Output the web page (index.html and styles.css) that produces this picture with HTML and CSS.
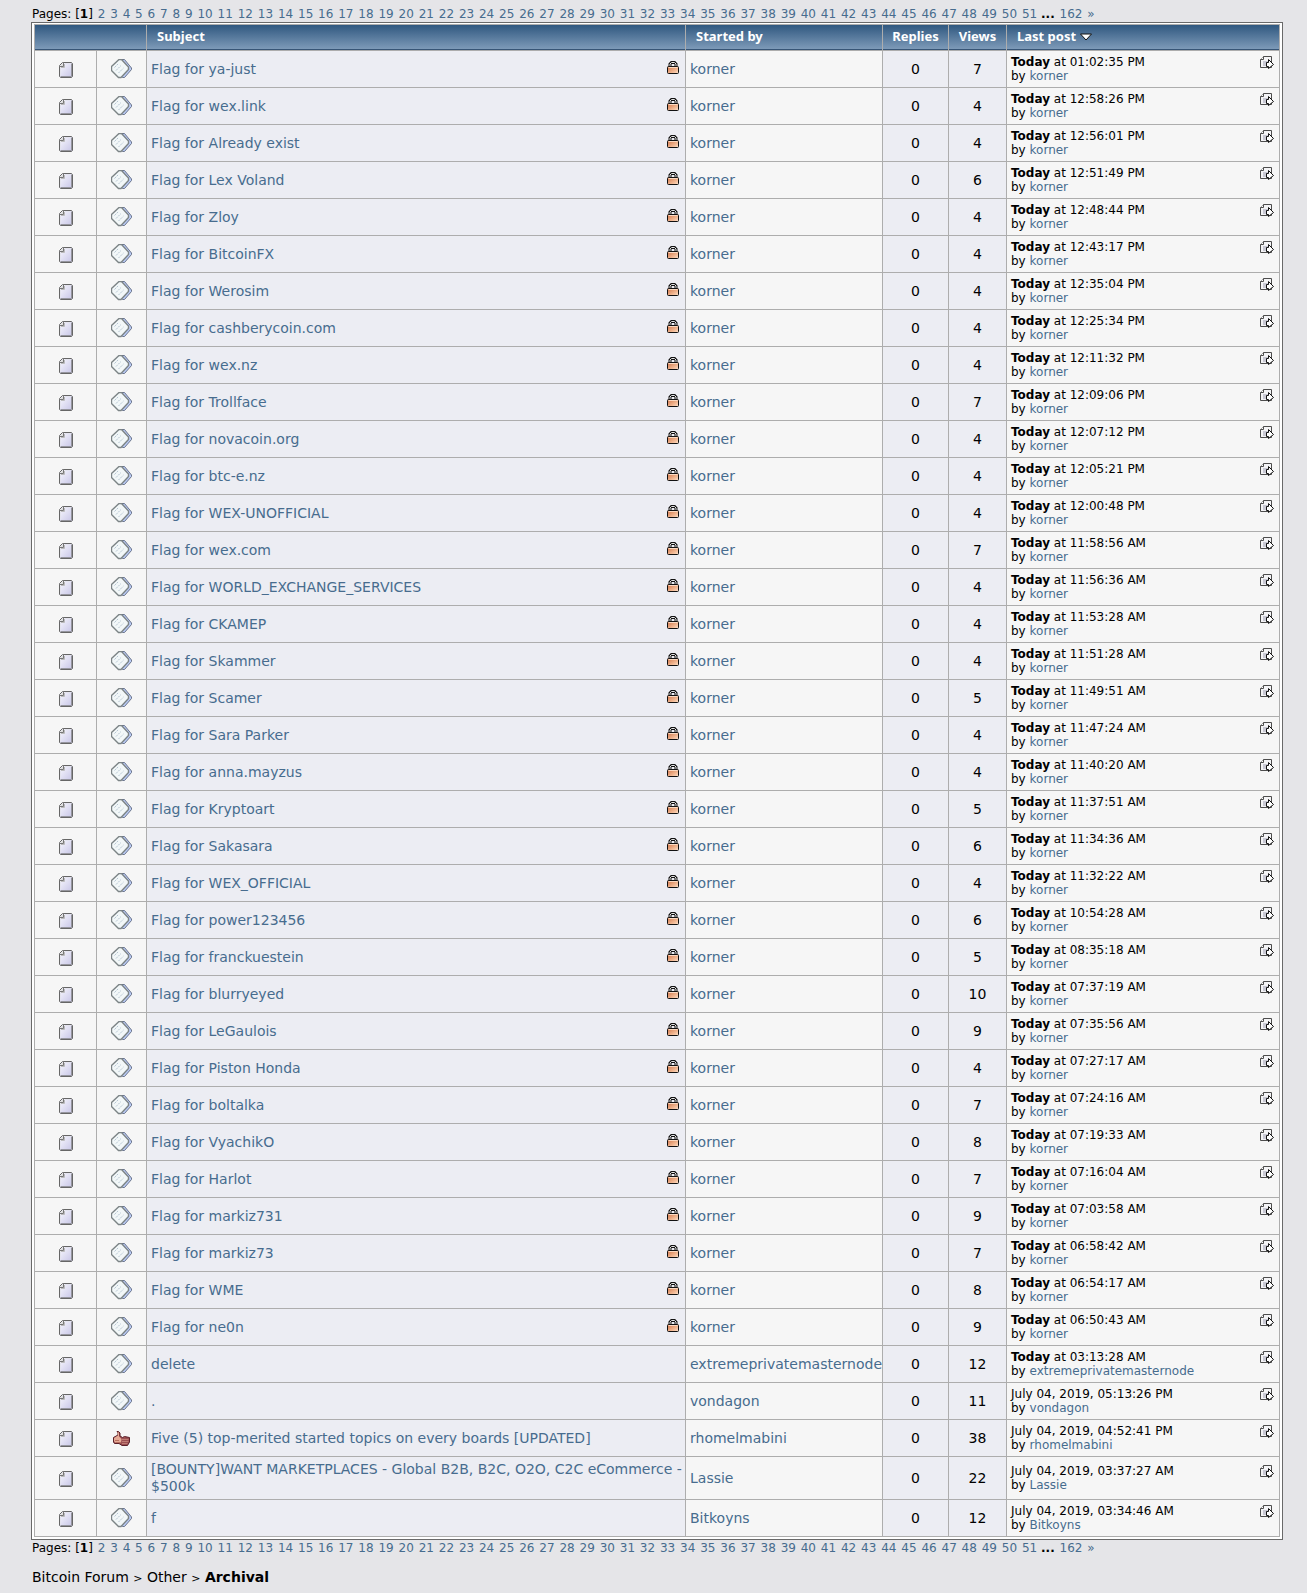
FILE: index.html
```
<!DOCTYPE html>
<html lang="en">
<head>
  <meta charset="UTF-8">
  <meta name="viewport" content="width=device-width, initial-scale=1.0">
  <title>Archival</title>
  <link rel="stylesheet" href="styles.css">
</head>
<body>
  <!-- icon sprites -->
  <svg class="sprites" aria-hidden="true">
    <defs>
      <linearGradient id="page-fill" x1="0" y1="0" x2="1" y2="1">
        <stop offset="0" stop-color="#fafaff"/><stop offset="1" stop-color="#c6c4e6"/>
      </linearGradient>
      <linearGradient id="lock-fill" x1="0" y1="0" x2="1" y2="1">
        <stop offset="0" stop-color="#d0764a"/><stop offset=".6" stop-color="#f0b48e"/><stop offset="1" stop-color="#ffe3cc"/>
      </linearGradient>
    </defs>
    <symbol id="i-topic" viewBox="0 0 14 16">
      <path d="M3.500.5H12.500L13.500 1.500V14.500L12.500 15.500H1.500L.5 14.500V3.500z" fill="url(#page-fill)" stroke="#666"/>
      <path d="M12.500 1.500V14.500H1.500" fill="none" stroke="#96969e"/>
      <path d="M1.500 5.500V13.500M6 1.500H11.500" fill="none" stroke="#e4e4ee"/>
      <path d="M4.500.5V4.500H.5" fill="#ddd" stroke="#777"/>
      <path d="M2 5.500H5.500V2" fill="none" stroke="#bbb"/>
    </symbol>
    <symbol id="i-post" viewBox="0 0 21 20">
      <path d="M11 .5H13.500L20.500 9V10.500L13.500 18.500H11.500L8 15V4z" fill="#b9caf5" stroke="#6c768c"/>
      <path d="M8 .5H10.500L17.500 8V10.500L10 18.500H7.500L.5 11.500V7.500z" fill="#f2f7f8" stroke="#7c8486" stroke-width="1.400"/>
      <path d="M3.500 8.500L7.500 4.500M5 11.500L10 6.500M7.500 14L12.500 9" stroke="#b4c4d2" stroke-dasharray="2 1" fill="none"/>
    </symbol>
    <symbol id="i-thumb" viewBox="0 0 17 16">
      <path d="M4 .5H5.500L7 2V5L9.500 6.500L11.500 5.500L16.500 6.500V11L14.500 14.500H9L6 12.500H1.500L.5 11V6.500L5 4V2z" fill="#9c4f52" stroke="#5a2029"/>
      <path d="M4.500 1H5.500L6 2.500V5.500L8.500 8L8 11.500H2L1 10V7L5 4.500z" fill="#e6aa96"/>
      <path d="M2 9.500H6M3 11.500H8" stroke="#b9705f"/>
      <path d="M9 8.500H15.500M9 10.500H15.500M9 12.500H14.500" stroke="#c07c74"/>
    </symbol>
    <symbol id="i-lock" viewBox="0 0 12 13">
      <path d="M3 6.500V3L4.500 1.500H7.500L9 3V6.500" fill="none" stroke="#111" stroke-width="3"/>
      <path d="M3 6V3L4.500 1.500H7.500L9 3V6" fill="none" stroke="#e6e6e6"/>
      <rect x=".5" y="5.500" width="11" height="7" rx="1" fill="url(#lock-fill)" stroke="#111"/>
      <path d="M1.500 6.500H10.500" stroke="#fbd9c0"/>
    </symbol>
    <symbol id="i-last" viewBox="0 0 14 13">
      <path d="M3.500.5H11.500V11.500H.5V3.500z" fill="#f4f4f6" stroke="#4d4d4d"/>
      <path d="M3 5H9V10H3z" fill="#c9c9d4"/>
      <path d="M3.500.5V3.500H.5" fill="#fff" stroke="#4d4d4d"/>
      <path d="M6.500 6.500H8.500V3.500L13.500 8.500L8.500 12.500V10.500H6.500z" fill="#fff" stroke="#111"/>
    </symbol>
    <symbol id="i-sort" viewBox="0 0 12 8">
      <path d="M.5 1H11.500L6 7z" fill="#fff" stroke="#111"/>
    </symbol>
  </svg>

  <main class="body-area">
    <nav class="pages" aria-label="Pages"></nav>
    <div class="border">
      <table class="topics">
        <colgroup>
          <col class="c-status">
          <col class="c-icon">
          <col class="c-subject">
          <col class="c-starter">
          <col class="c-replies">
          <col class="c-views">
          <col class="c-last">
        </colgroup>
        <thead>
          <tr>
            <th colspan="2"></th>
            <th><a href="#">Subject</a></th>
            <th><a href="#">Started by</a></th>
            <th class="count"><a href="#">Replies</a></th>
            <th class="count"><a href="#">Views</a></th>
            <th><a href="#">Last post <svg width="12" height="8"><use href="#i-sort"/></svg></a></th>
          </tr>
        </thead>
        <tbody id="topic-rows"></tbody>
      </table>
    </div>
    <nav class="pages" aria-label="Pages"></nav>
    <div class="linktree">
      <a href="#">Bitcoin Forum</a> <small>&gt;</small> <a href="#">Other</a> <small>&gt;</small> <a class="current" href="#">Archival</a>
    </div>
  </main>
  <script src="script.js"></script>
</body>
</html>
```
FILE: styles.css
```
body {
  margin: 0;
  padding: 6px 24px 12px 31px;
  background: #e5e5e8;
  color: #000;
  font-family: Verdana, "DejaVu Sans", sans-serif;
  font-size: 14px;
}
a { color: #476c8e; text-decoration: none; }
a:hover { text-decoration: underline; }
.sprites { position: absolute; width: 0; height: 0; }

.pages {
  padding-left: 1px;
  font-size: 12px;
  line-height: 16px;
  white-space: nowrap;
}
.pages a { margin-left: 1px; }

.border {
  border: 1px solid #696969;
  background: #fff;
  padding: 1px 2px 2px;
}
.topics {
  width: 100%;
  background: #adadad;
  border-spacing: 1px;
  table-layout: fixed;
}
.c-status { width: 61px; }
.c-icon { width: 49px; }
.c-starter { width: 196px; }
.c-replies { width: 65px; }
.c-views { width: 57px; }
.c-last { width: 272px; }

.topics th {
  box-sizing: border-box;
  height: 25px;
  padding: 0 10px 3px;
  background: linear-gradient(#305880, #7d9ab8);
  border-bottom: 1px solid #375576;
  font-family: Tahoma, "Noto Sans", sans-serif;
  font-size: 13px;
  line-height: 16px;
  text-align: left;
}
.topics th a { color: #fff; }
.topics th.count { padding: 0 0 3px; text-align: center; }

.topics td {
  box-sizing: border-box;
  height: 36px;
  padding: 4px;
  background: #f6f6f6;
  line-height: 17px;
}
.topics td.shade { background: #ecedf3; }
.topics td.status,
.topics td.icon,
.topics td.count { padding: 0; text-align: center; }
.topics td.subject { padding-right: 2px; }
.topics td.starter { padding-right: 0; }
.topics td svg { vertical-align: middle; }
.topics td .lock { float: right; margin-right: 4px; }
.topics td.last { font-size: 12px; line-height: 14px; }
.topics td .goto { float: right; margin: 1px 1px 0 0; line-height: 0; }

.linktree {
  margin-top: 13px;
  padding-left: 1px;
  line-height: 17px;
}
.linktree a { color: #000; }
.linktree .current { font-weight: bold; }
.linktree small { font-size: 11px; }
```
FILE: script.js
```
// flagged name, time (today), views
const flags = [
  ['ya-just', '01:02:35 PM', 7], ['wex.link', '12:58:26 PM', 4], ['Already exist', '12:56:01 PM', 4],
  ['Lex Voland', '12:51:49 PM', 6], ['Zloy', '12:48:44 PM', 4], ['BitcoinFX', '12:43:17 PM', 4],
  ['Werosim', '12:35:04 PM', 4], ['cashberycoin.com', '12:25:34 PM', 4], ['wex.nz', '12:11:32 PM', 4],
  ['Trollface', '12:09:06 PM', 7], ['novacoin.org', '12:07:12 PM', 4], ['btc-e.nz', '12:05:21 PM', 4],
  ['WEX-UNOFFICIAL', '12:00:48 PM', 4], ['wex.com', '11:58:56 AM', 7], ['WORLD_EXCHANGE_SERVICES', '11:56:36 AM', 4],
  ['CKAMEP', '11:53:28 AM', 4], ['Skammer', '11:51:28 AM', 4], ['Scamer', '11:49:51 AM', 5],
  ['Sara Parker', '11:47:24 AM', 4], ['anna.mayzus', '11:40:20 AM', 4], ['Kryptoart', '11:37:51 AM', 5],
  ['Sakasara', '11:34:36 AM', 6], ['WEX_OFFICIAL', '11:32:22 AM', 4], ['power123456', '10:54:28 AM', 6],
  ['franckuestein', '08:35:18 AM', 5], ['blurryeyed', '07:37:19 AM', 10], ['LeGaulois', '07:35:56 AM', 9],
  ['Piston Honda', '07:27:17 AM', 4], ['boltalka', '07:24:16 AM', 7], ['VyachikO', '07:19:33 AM', 8],
  ['Harlot', '07:16:04 AM', 7], ['markiz731', '07:03:58 AM', 9], ['markiz73', '06:58:42 AM', 7],
  ['WME', '06:54:17 AM', 8], ['ne0n', '06:50:43 AM', 9]
];

const topics = flags.map(([name, time, views]) => ({
  subject: 'Flag for ' + name, by: 'korner', views, date: '<b>Today</b> at ' + time, locked: true
}));
topics.push(
  { subject: 'delete', by: 'extremeprivatemasternode', views: 12, date: '<b>Today</b> at 03:13:28 AM' },
  { subject: '.', by: 'vondagon', views: 11, date: 'July 04, 2019, 05:13:26 PM' },
  { subject: 'Five (5) top-merited started topics on every boards [UPDATED]', by: 'rhomelmabini', views: 38, date: 'July 04, 2019, 04:52:41 PM', thumb: true },
  { subject: '[BOUNTY]WANT MARKETPLACES - Global B2B, B2C, O2O, C2C eCommerce - $500k', by: 'Lassie', views: 22, date: 'July 04, 2019, 03:37:27 AM' },
  { subject: 'f', by: 'Bitkoyns', views: 12, date: 'July 04, 2019, 03:34:46 AM' }
);

function icon(name, w, h) {
  return `<svg class="${name}" width="${w}" height="${h}" aria-hidden="true"><use href="#i-${name}"/></svg>`;
}

document.getElementById('topic-rows').innerHTML = topics.map(t => `
  <tr>
    <td class="status">${icon('topic', 14, 16)}</td>
    <td class="icon">${t.thumb ? icon('thumb', 17, 16) : icon('post', 21, 20)}</td>
    <td class="shade subject">${t.locked ? icon('lock', 12, 13) : ''}<a href="#">${t.subject}</a></td>
    <td class="starter"><a href="#">${t.by}</a></td>
    <td class="shade count">0</td>
    <td class="shade count">${t.views}</td>
    <td class="last"><a class="goto" href="#" aria-label="Last post">${icon('last', 14, 13)}</a>${t.date}<br>by <a href="#">${t.by}</a></td>
  </tr>`).join('');

// page links: 2..51 ... 162 »
const links = [];
for (let i = 2; i <= 51; i++) links.push(`<a href="#">${i}</a>`);
document.querySelectorAll('.pages').forEach(nav => {
  nav.innerHTML = `Pages: [<b>1</b>] ${links.join(' ')} <b>...</b> <a href="#">162</a> <a href="#">»</a>`;
});
```
